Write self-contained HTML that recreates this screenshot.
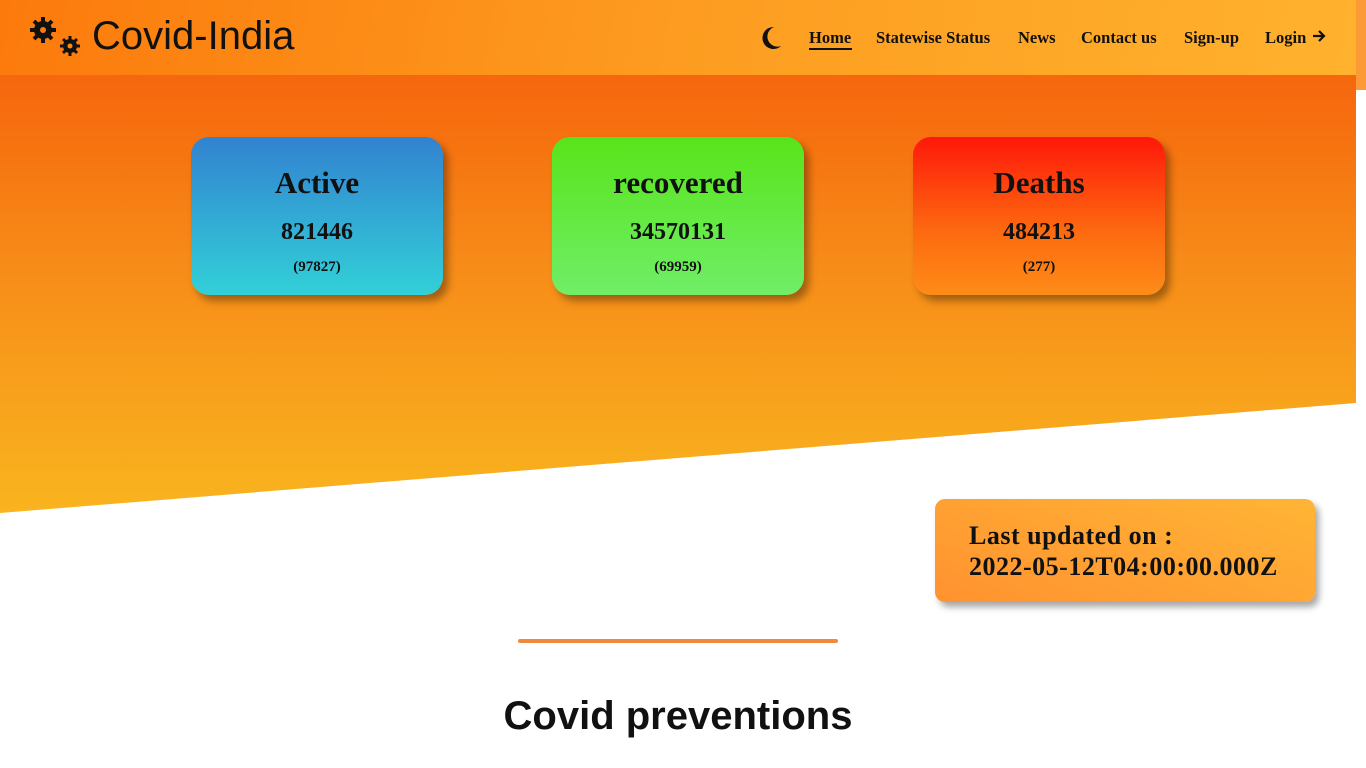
<!DOCTYPE html>
<html><head><meta charset="utf-8"><style>
*{margin:0;padding:0;box-sizing:border-box}
body{width:1366px;height:768px;overflow:hidden;background:#fff;position:relative;font-family:"Liberation Serif",serif}
.hero{position:absolute;left:0;top:0;width:1356px;height:513px;background:linear-gradient(180deg,#f65a0e 0%,#f6700f 25%,#f78a18 50%,#f8a01c 75%,#f9b41e 100%);clip-path:polygon(0 0,100% 0,100% 403px,0 513px)}
.nav{position:absolute;left:0;top:0;width:1356px;height:75px;background:linear-gradient(100deg,#fc7a0c 0%,#fd9c20 50%,#ffb22e 100%)}
.strip{position:absolute;left:1356px;top:0;width:10px;height:90px;background:#fd9a38}
.logo{position:absolute;left:92px;top:14px;font:40px "Liberation Sans",sans-serif;color:#111}
.links{position:absolute;top:28px;font-weight:bold;font-size:16.5px;color:#111}
.links span{position:absolute;white-space:nowrap}
.card{position:absolute;top:137px;width:252px;height:158px;border-radius:18px;box-shadow:5px 6px 8px rgba(0,0,0,.35);text-align:center;font-weight:bold;color:#111}
.card h2{font-size:31px;margin-top:28px;line-height:36px}
.card .n{font-size:24px;margin-top:17px;line-height:28px}
.card .d{font-size:15px;margin-top:13px}
.upd{position:absolute;left:935px;top:499px;width:380px;height:103px;border-radius:10px;background:linear-gradient(20deg,#ff9230,#ffb535);box-shadow:4px 5px 7px rgba(0,0,0,.35);font-weight:bold;font-size:26px;line-height:31px;padding:21px 0 0 34px;color:#111;letter-spacing:.5px;white-space:nowrap}
.bar{position:absolute;left:518px;top:639px;width:320px;height:4px;border-radius:2px;background:#f08a3e}
h1{position:absolute;left:0;width:1356px;top:694px;text-align:center;font:bold 40px "Liberation Sans",sans-serif;color:#111}
</style></head><body>
<div class="hero"></div>
<div class="nav"></div><div class="strip"></div>
<svg style="position:absolute;left:28px;top:15px" width="56" height="42" viewBox="0 0 56 42">
<g fill="#111"><circle cx="15" cy="15" r="9"/><g stroke="#111" stroke-width="4"><line x1="15" y1="2" x2="15" y2="28"/><line x1="2" y1="15" x2="28" y2="15"/><line x1="6" y1="6" x2="24" y2="24"/><line x1="24" y1="6" x2="6" y2="24"/></g><circle cx="15" cy="15" r="3" fill="#fc7a0c"/>
<circle cx="42" cy="31" r="7"/><g stroke="#111" stroke-width="3"><line x1="42" y1="21" x2="42" y2="41"/><line x1="32" y1="31" x2="52" y2="31"/><line x1="35" y1="24" x2="49" y2="38"/><line x1="49" y1="24" x2="35" y2="38"/></g><circle cx="42" cy="31" r="2.5" fill="#fd8a14"/></g></svg>
<div class="logo">Covid-India</div>
<svg style="position:absolute;left:760px;top:26px" width="22" height="24" viewBox="0 0 22 24"><path d="M14 1A11 11 0 1 0 21 20 9 9 0 0 1 14 1Z" fill="#111"/></svg>
<div class="links" style="left:0">
<span style="left:809px">Home</span>
<div style="position:absolute;left:809px;top:20px;width:43px;height:2px;background:#111"></div>
<span style="left:876px">Statewise Status</span>
<span style="left:1018px">News</span>
<span style="left:1081px">Contact us</span>
<span style="left:1184px">Sign-up</span>
<span style="left:1265px">Login</span>
</div>
<svg style="position:absolute;left:1311px;top:28px" width="16" height="16" viewBox="0 0 16 16"><path d="M2 8H13M8 3L13 8 8 13" stroke="#111" stroke-width="2.2" fill="none"/></svg>
<div class="card" style="left:191px;background:linear-gradient(180deg,#3282d0,#32d0d8)"><h2>Active</h2><div class="n">821446</div><div class="d">(97827)</div></div>
<div class="card" style="left:552px;background:linear-gradient(180deg,#58e41a,#70ee68)"><h2>recovered</h2><div class="n">34570131</div><div class="d">(69959)</div></div>
<div class="card" style="left:913px;background:linear-gradient(180deg,#fe180a,#fd6a10 60%,#fe8c18)"><h2>Deaths</h2><div class="n">484213</div><div class="d">(277)</div></div>
<div class="upd">Last updated on :<br>2022-05-12T04:00:00.000Z</div>
<div class="bar"></div>
<h1>Covid preventions</h1>
</body></html>
